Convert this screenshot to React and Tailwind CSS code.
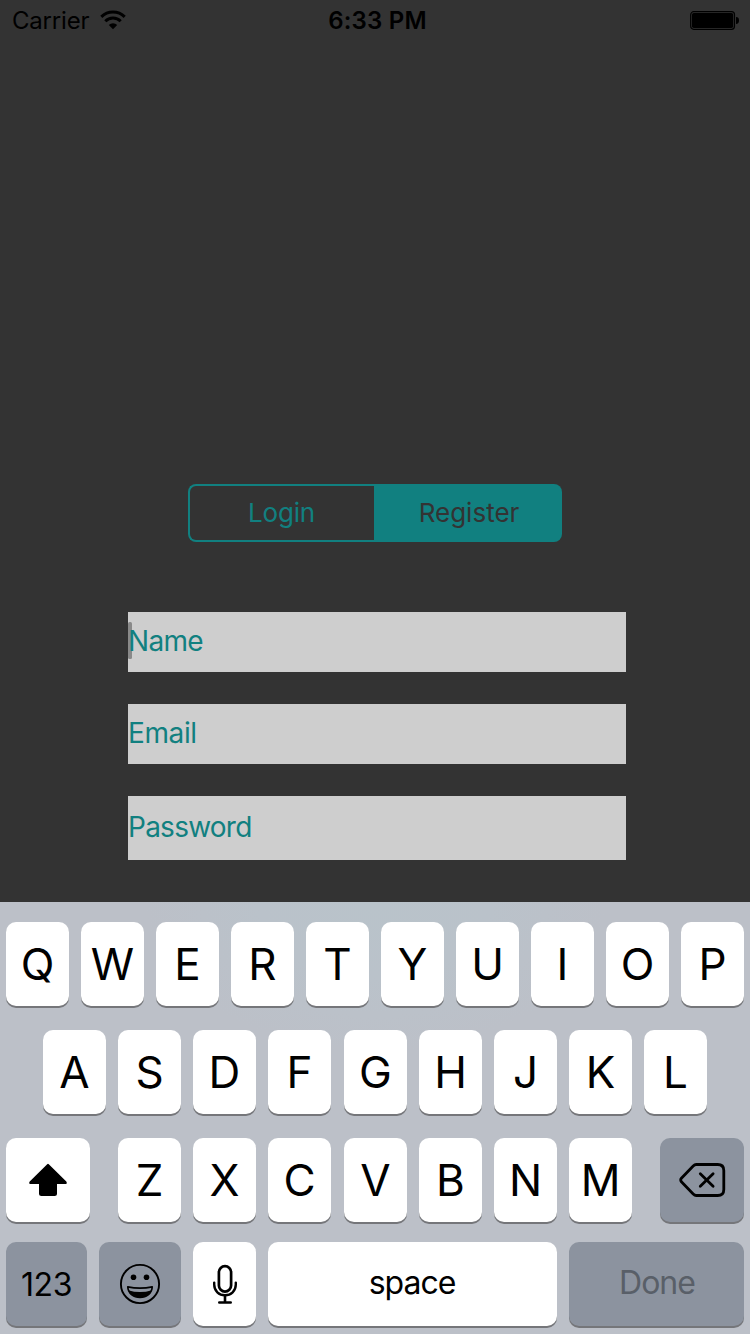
import React from "react";

function Key({ children, className = "w-[63px] bg-white text-[44px]" }) {
  return (
    <button
      className={
        "flex h-[84px] shrink-0 items-center justify-center rounded-[10px] leading-none shadow-[0_2px_0_#75767a] " +
        className
      }
    >
      {children}
    </button>
  );
}

function WifiIcon() {
  return (
    <svg width="26" height="20" viewBox="0 0 26 20" fill="none" stroke="black" className="-mt-0.5">
      <path d="M1.3 6.9a16.6 16.6 0 0 1 23.4 0" strokeWidth="3" />
      <path d="M5.3 11.2a10.9 10.9 0 0 1 15.4 0" strokeWidth="3" />
      <path d="M13 19.2l-4.2-4.2a6 6 0 0 1 8.4 0z" fill="black" stroke="none" />
    </svg>
  );
}

function BatteryIcon() {
  return (
    <svg width="50" height="20" viewBox="0 0 50 20">
      <rect x="0.7" y="0.7" width="43.8" height="17.6" rx="3" fill="none" stroke="black" strokeWidth="1.2" />
      <rect x="2" y="2" width="41.2" height="15" rx="1.8" />
      <path d="M46 6.1c2 0 3 1 3 3.4s-1 3.4-3 3.4z" />
    </svg>
  );
}

function StatusBar() {
  return (
    <header className="grid h-10 grid-cols-3 items-center pt-[2px] text-[24px] leading-none text-black">
      <div className="flex items-center pl-[12px]">
        <span className="w-[88px] tracking-[-0.2px]">Carrier</span>
        <WifiIcon />
      </div>
      <div className="text-center font-semibold tracking-[0.2px] pl-[5px]">6:33 PM</div>
      <div className="flex justify-end pr-[10px]">
        <BatteryIcon />
      </div>
    </header>
  );
}

function Field({ label, className, focused }) {
  return (
    <div className={"relative flex w-[498px] items-center bg-[#cecece] pb-0.5 text-[28px] leading-none text-[#118080] " + className}>
      {focused && <span className="absolute top-[10px] left-0 h-[37px] w-1 rounded-[1.5px] bg-[#898989]" />}
      <span className="relative">{label}</span>
    </div>
  );
}

function ShiftIcon() {
  return (
    <svg width="38" height="34" viewBox="0 0 38 34" className="mb-px">
      <path d="M18.2 1.2Q19 .4 19.8 1.2L37.3 18.5Q38.5 20.5 36.8 20.9H28V30.5Q28 33 25.5 33H12.5Q10 33 10 30.5V20.9H1.2Q-.5 20.5.7 18.5Z" />
    </svg>
  );
}

function DeleteIcon() {
  return (
    <svg width="48" height="36" viewBox="0 0 48 36" fill="none" stroke="black" strokeLinecap="round" strokeLinejoin="round" className="ml-0.5">
      <path d="M17.2 2.5H38.7Q44.8 2.5 44.8 8.5V27.5Q44.8 33.5 38.7 33.5H17.2Q15.7 33.5 14.2 32L2.4 19.8Q1 18 2.4 16.2L14.2 4Q15.7 2.5 17.2 2.5Z" strokeWidth="2.8" />
      <path d="M21.3 11.7l12.8 12.6m0-12.6l-12.8 12.6" strokeWidth="2.8" />
    </svg>
  );
}

function EmojiIcon() {
  return (
    <svg width="42" height="42" viewBox="0 0 42 42">
      <circle cx="21" cy="21" r="19.1" fill="none" stroke="black" strokeWidth="1.9" />
      <circle cx="14.5" cy="14.3" r="2.8" />
      <circle cx="27.5" cy="14.3" r="2.8" />
      <path d="M8.8 23.8Q21 26.5 33.2 23.8C33 30.5 27.5 34.3 21 34.3S9 30.5 8.8 23.8Z" fill="none" stroke="black" strokeWidth="1.7" strokeLinejoin="round" />
      <path d="M9.2 27.2Q21 31 32.8 27.2C31 32.3 26.5 34.3 21 34.3S11 32.3 9.2 27.2Z" />
    </svg>
  );
}

function MicIcon() {
  return (
    <svg width="26" height="40" viewBox="0 0 26 40" fill="none" stroke="black" strokeWidth="2.7" strokeLinecap="round">
      <rect x="6.9" y="2.2" width="12.2" height="25.4" rx="6.1" />
      <path d="M2.2 18.6V20.5C2.2 27 7 31.3 13 31.3S23.8 27 23.8 20.5V18.6" strokeWidth="2.4" />
      <path d="M13 31.5V38.3M7.3 38.5H18.7" strokeWidth="2.6" />
    </svg>
  );
}

function Keyboard() {
  return (
    <div className="flex h-[432px] flex-col bg-[#bcc0c8] bg-[radial-gradient(ellipse_230px_150px_at_375px_0px,#b9c3ca_0%,#bac2ca_50%,#bcc0c8_100%)] px-[6px] pt-5 text-black">
      <div className="flex gap-3">
        {"QWERTYUIOP".split("").map((c) => (
          <Key key={c}>{c}</Key>
        ))}
      </div>
      <div className="mt-6 flex gap-[13px] pl-[37px]">
        <div className="flex gap-3">
          {"ASDF".split("").map((c) => (
            <Key key={c}>{c}</Key>
          ))}
        </div>
        <div className="flex gap-3">
          {"GHJKL".split("").map((c) => (
            <Key key={c}>{c}</Key>
          ))}
        </div>
      </div>
      <div className="mt-6 flex justify-between">
        <Key className="w-[84px] bg-white">
          <ShiftIcon />
        </Key>
        <div className="flex gap-[13px]">
          <div className="flex gap-3">
            {"ZXC".split("").map((c) => (
              <Key key={c}>{c}</Key>
            ))}
          </div>
          <div className="flex gap-3">
            {"VBNM".split("").map((c) => (
              <Key key={c}>{c}</Key>
            ))}
          </div>
        </div>
        <Key className="w-[84px] bg-[#8c939f]">
          <DeleteIcon />
        </Key>
      </div>
      <div className="mt-5 flex gap-3">
        <Key className="w-[81px] bg-[#8c939f] pt-0.5 text-[32px] tracking-[-0.4px]">123</Key>
        <Key className="w-[82px] bg-[#8c939f]">
          <EmojiIcon />
        </Key>
        <Key className="w-[63px] bg-white">
          <MicIcon />
        </Key>
        <Key className="w-[289px] bg-white pr-px pb-0.5 text-[32px] tracking-[-1px]">space</Key>
        <Key className="w-[175px] bg-[#8c939f] pl-px pb-0.5 text-[32px] tracking-[-1px] text-[#595f68]">Done</Key>
      </div>
    </div>
  );
}

export default function App() {
  return (
    <main className="flex h-[1334px] w-[750px] flex-col overflow-hidden bg-[#333333] font-['Inter',sans-serif]">
      <StatusBar />
      <section className="flex flex-1 flex-col pt-[444px]">
        <div className="ml-[188px] flex h-[58px] w-[374px] text-[26px] leading-none">
          <button className="w-[186px] rounded-l-[8px] border-2 border-r-0 border-[#118080] pr-px tracking-[-0.2px] text-[#118080]">Login</button>
          <button className="flex-1 rounded-r-[8px] bg-[#118080] pl-0.5 text-[#333333]">Register</button>
        </div>
        <div className="mt-[70px] ml-[128px] flex flex-col gap-8">
          <Field label="Name" className="h-[60px] tracking-[-0.7px]" focused />
          <Field label="Email" className="h-[60px] tracking-[-0.4px]" />
          <Field label="Password" className="h-[64px] tracking-[-0.75px]" />
        </div>
      </section>
      <Keyboard />
    </main>
  );
}
